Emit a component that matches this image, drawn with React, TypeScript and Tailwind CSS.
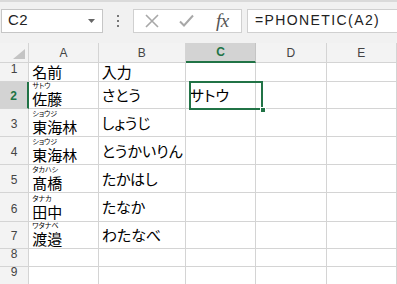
import React from "react";

type Row = {
  n: number;
  h: string;
  ruby?: string;
  a?: string;
  b?: string;
  c?: string;
};

const rows: Row[] = [
  { n: 1, h: "h-[19px]", a: "名前", b: "入力" },
  { n: 2, h: "h-[27px]", ruby: "サトウ", a: "佐藤", b: "さとう", c: "サトウ" },
  { n: 3, h: "h-[28px]", ruby: "ショウジ", a: "東海林", b: "しょうじ" },
  { n: 4, h: "h-[28px]", ruby: "ショウジ", a: "東海林", b: "とうかいりん" },
  { n: 5, h: "h-[28px]", ruby: "タカハシ", a: "髙橋", b: "たかはし" },
  { n: 6, h: "h-[29px]", ruby: "タナカ", a: "田中", b: "たなか" },
  { n: 7, h: "h-[27px]", ruby: "ワタナベ", a: "渡邉", b: "わたなべ" },
  { n: 8, h: "h-[18px]" },
  { n: 9, h: "h-[18px]" },
];

const jp = "font-['Noto_Sans_CJK_JP',sans-serif] [font-feature-settings:'palt'] text-[15px] text-black";
const ui = "font-['Liberation_Sans',Arial,sans-serif]";

function FormulaBar() {
  return (
    <div className="h-[43px] bg-[#f1f1f1] border-t-2 border-[#dadada] flex items-center pl-px pr-0 pb-[4px]">
      <div className="w-[102px] h-[24px] bg-white border border-[#c6c6c6] flex items-center justify-between pl-[6px] pr-[7px]">
        <span className={`${ui} text-[15px] text-[#222] tracking-[0.5px]`}>C2</span>
        <svg width="7" height="4" viewBox="0 0 7 4">
          <path d="M0 0h7L3.5 4z" fill="#666" />
        </svg>
      </div>
      <div className="w-[30px] flex flex-col items-center gap-[3px]">
        <span className="w-[2px] h-[2px] bg-[#777]" />
        <span className="w-[2px] h-[2px] bg-[#777]" />
        <span className="w-[2px] h-[2px] bg-[#777]" />
      </div>
      <div className="w-[109px] h-[24px] bg-white border border-[#d0d0d0] flex items-center">
        <svg width="14" height="14" viewBox="0 0 14 14" className="ml-[11px]">
          <path d="M1 1L13 13M13 1L1 13" stroke="#a8a8a8" strokeWidth="1.6" />
        </svg>
        <svg width="15" height="13" viewBox="0 0 15 13" className="ml-[20px]">
          <path d="M1 7.5L5 11.5L14 1.5" stroke="#a8a8a8" strokeWidth="2" fill="none" />
        </svg>
        <span className="ml-[22px] font-['Liberation_Serif',serif] italic text-[19px] leading-none text-[#555] tracking-[-0.5px]">
          fx
        </span>
      </div>
      <div className="ml-[5px] flex-1 h-[24px] bg-white border border-r-0 border-[#d0d0d0] flex items-center pl-[7px]">
        <span className={`${ui} text-[14px] text-[#222] tracking-[1.4px]`}>=PHONETIC(A2)</span>
      </div>
    </div>
  );
}

function Header() {
  const cell = `${ui} text-[12px] text-[#444] flex items-center justify-center border-r border-b border-[#d4d4d4]`;
  return (
    <div className="flex h-[20px] bg-[#f3f3f3]">
      <div className="w-[30px] relative border-r border-b border-[#d4d4d4]">
        <svg width="12" height="10" viewBox="0 0 12 10" className="absolute right-[3px] bottom-[3px]">
          <path d="M12 0V10H0z" fill="#c4c4c4" />
        </svg>
      </div>
      <div className={`w-[71px] ${cell}`}>A</div>
      <div className={`w-[89px] ${cell}`}>B</div>
      <div className={`w-[72px] ${ui} text-[12px] text-[#217346] font-bold flex items-center justify-center bg-[#d3d3d3] border-r border-[#c4c4c4] border-b-2 border-b-[#217346]`}>
        C
      </div>
      <div className={`w-[72px] ${cell}`}>D</div>
      <div className={`w-[72px] ${cell}`}>E</div>
    </div>
  );
}

function GridRow({ r }: { r: Row }) {
  const active = r.n === 2;
  const border = "border-r border-b border-[#d4d4d4]";
  return (
    <div className={`flex ${r.h}`}>
      <div
        className={`w-[30px] flex items-end justify-center pb-[3px] ${ui} text-[12px] border-b border-[#d4d4d4] ${
          active
            ? "bg-[#d3d3d3] text-[#217346] font-bold border-r-2 border-r-[#217346]"
            : "bg-[#f3f3f3] text-[#444] border-r"
        }`}
      >
        {r.n}
      </div>
      <div className={`w-[71px] ${border} pl-[3px] flex flex-col justify-end ${r.ruby ? "pb-[1px]" : "pb-0"}`}>
        {r.ruby && (
          <span className="font-['Noto_Sans_CJK_JP',sans-serif] [font-feature-settings:'palt'] text-[7px] leading-[7px] mb-[2px] text-black">
            {r.ruby}
          </span>
        )}
        {r.a && <span className={`${jp} ${r.ruby ? "leading-[16px]" : "leading-[18px]"}`}>{r.a}</span>}
      </div>
      <div className={`w-[89px] ${border} pl-[3px] flex ${r.n === 1 ? "items-end" : "items-center"}`}>
        {r.b && <span className={`${jp} leading-[18px]`}>{r.b}</span>}
      </div>
      <div className={`w-[72px] ${border} pl-[4px] flex items-center`}>
        {r.c && <span className={`${jp} leading-[18px]`}>{r.c}</span>}
      </div>
      <div className={`w-[72px] ${border}`} />
      <div className={`w-[72px] ${border}`} />
    </div>
  );
}

export default function App() {
  return (
    <div className="w-[397px] h-[284px] overflow-hidden bg-white relative">
      <FormulaBar />
      <Header />
      {rows.map((r) => (
        <GridRow key={r.n} r={r} />
      ))}
      <div className="absolute left-[189px] top-[81px] w-[74px] h-[29px] border-2 border-[#217346] pointer-events-none" />
      <div className="absolute left-[260px] top-[107px] w-[6px] h-[6px] bg-[#217346] border border-white" />
    </div>
  );
}
